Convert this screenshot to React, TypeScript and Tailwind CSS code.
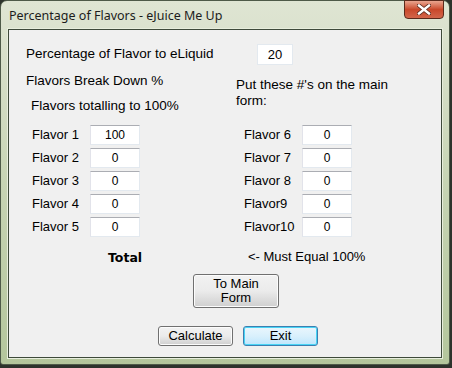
import React from "react";

const Box = ({ v }: { v: string }) => (
  <div className="w-[50px] h-[20px] bg-white border border-[#abadb3] border-r-[#e3e9ef] border-b-[#e3e9ef] border-l-[#e2e3ea] flex items-center justify-center text-[12px] leading-none text-black">
    {v}
  </div>
);

const Row = ({ a, av, b, bv }: { a: string; av: string; b: string; bv: string }) => (
  <div className="flex items-center h-[20px]">
    <div className="w-[64px] pl-[6px] text-[13px]">{a}</div>
    <Box v={av} />
    <div className="w-[104px]" />
    <div className="w-[58px] text-[13px]">{b}</div>
    <Box v={bv} />
  </div>
);

export default function App() {
  return (
    <div className="w-[452px] h-[368px] bg-[#2e332c] relative overflow-hidden" style={{ fontFamily: '"Liberation Sans", Arial, sans-serif' }}>
      <div className="absolute left-0 top-0 w-[450px] h-[365px] rounded-t-[7px] rounded-b-[3px] border border-[#4e5a48] bg-gradient-to-b from-[#dfe5d3] via-[#c7d4b4] to-[#b4c69c] flex flex-col px-[7px] pb-[6px]">
        <div className="h-[28px] flex items-start justify-between">
          <div className="pt-[7px] pl-[1px] text-[13px] leading-[16px] text-[#1c1c1c]" style={{ fontFamily: '"Noto Sans", "Liberation Sans", sans-serif', fontSize: 12.5 }}>
            Percentage of Flavors - eJuice Me Up
          </div>
          <div className="-mt-[1px] mr-[-2px] w-[40px] h-[19px] rounded-b-[4px] border border-[#5a2a1c] bg-gradient-to-b from-[#e9a58f] via-[#c9482a] to-[#d2654a] flex items-center justify-center">
            <svg width="14" height="11" viewBox="0 0 14 11">
              <path d="M2 1.5 L12 9.5 M12 1.5 L2 9.5" stroke="#5a2a1c" strokeWidth="4" strokeLinecap="square" />
              <path d="M2 1.5 L12 9.5 M12 1.5 L2 9.5" stroke="#ffffff" strokeWidth="2.4" strokeLinecap="square" />
            </svg>
          </div>
        </div>
        <div className="flex-1 border border-[#3e4a3a] shadow-[0_0_0_1px_#e8eedd] bg-[#f0f0f0] text-[13px] text-black flex flex-col">
          <div className="flex items-center mt-[14px] pl-[17px] h-[21px]">
            <div className="w-[231px]" style={{ fontSize: 13.5 }}>Percentage of Flavor to eLiquid</div>
            <div className="w-[36px] h-[21px] bg-white border border-[#e3e9ef] flex items-center justify-center text-[13px]">20</div>
          </div>
          <div className="flex pl-[17px] mt-[8px]">
            <div className="w-[210px]">
              <div className="leading-[16px]" style={{ fontSize: 13.5 }}>Flavors Break Down %</div>
              <div className="leading-[16px] mt-[9px] pl-[5px]" style={{ fontSize: 13.5 }}>Flavors totalling to 100%</div>
            </div>
            <div className="w-[160px] leading-[16px] mt-[4px]" style={{ fontSize: 13.5 }}>Put these #'s on the main form:</div>
          </div>
          <div className="flex flex-col gap-[3px] mt-[11px] pl-[17px]">
            <Row a="Flavor 1" av="100" b="Flavor 6" bv="0" />
            <Row a="Flavor 2" av="0" b="Flavor 7" bv="0" />
            <Row a="Flavor 3" av="0" b="Flavor 8" bv="0" />
            <Row a="Flavor 4" av="0" b="Flavor9" bv="0" />
            <Row a="Flavor 5" av="0" b="Flavor10" bv="0" />
          </div>
          <div className="flex items-center mt-[13px] h-[16px]">
            <div className="w-[239px] pl-[99px] font-bold" style={{ fontFamily: '"DejaVu Sans", sans-serif', fontSize: 12.5 }}>Total</div>
            <div className="-mt-[3px] text-[13px]">&lt;- Must Equal 100%</div>
          </div>
          <div className="flex justify-center mt-[8px] pl-[22px]">
            <div className="w-[86px] h-[34px] rounded-[3px] border border-[#707070] bg-gradient-to-b from-[#f2f2f2] via-[#ebebeb] to-[#cfcfcf] shadow-[inset_0_0_0_1px_#fcfcfc] flex flex-col items-center justify-center text-[13px] leading-[14px]">
              <span>To Main</span>
              <span>Form</span>
            </div>
          </div>
          <div className="flex pl-[149px] gap-[10px] mt-[18px]">
            <div className="w-[75px] h-[20px] rounded-[3px] border border-[#707070] bg-gradient-to-b from-[#f2f2f2] via-[#ebebeb] to-[#cfcfcf] shadow-[inset_0_0_0_1px_#fcfcfc] flex items-center justify-center text-[13px]">Calculate</div>
            <div className="w-[75px] h-[20px] rounded-[3px] border border-[#3c7fb1] bg-gradient-to-b from-[#eaf6fd] via-[#d9f0fc] to-[#bee6fd] shadow-[inset_0_0_0_1px_#48d4f5] flex items-center justify-center text-[13px]">Exit</div>
          </div>
        </div>
      </div>
    </div>
  );
}
